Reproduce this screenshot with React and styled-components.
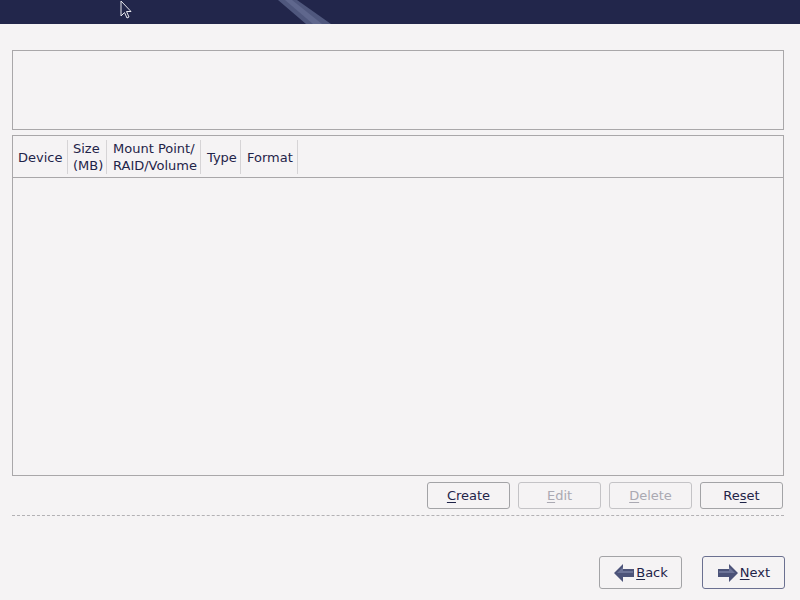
import React from 'react'
import styled, { createGlobalStyle } from 'styled-components'

const GlobalStyle = createGlobalStyle`
  html, body {
    margin: 0;
    padding: 0;
    background: #f5f3f4;
  }
  body {
    font-family: "DejaVu Sans", "Liberation Sans", sans-serif;
    font-size: 13px;
    color: #1f2449;
  }
`

const columns = [
  { label: ['Device'], width: 55, pad: 5 },
  { label: ['Size', '(MB)'], width: 39, pad: 5 },
  { label: ['Mount Point/', 'RAID/Volume'], width: 94, pad: 6 },
  { label: ['Type'], width: 40, pad: 6 },
  { label: ['Format'], width: 57, pad: 6 },
]

const LeftArrow = () => (
  <svg width="22" height="20" viewBox="0 0 22 20">
    <polygon points="1,10 10,1 10,6 21,6 21,14 10,14 10,19" fill="#4c5379" />
    <polygon points="4,10 10,4 10,8 20,8 20,10" fill="#6d7498" />
  </svg>
)

const RightArrow = () => (
  <svg width="22" height="20" viewBox="0 0 22 20">
    <polygon points="21,10 12,1 12,6 1,6 1,14 12,14 12,19" fill="#4c5379" />
    <polygon points="18,10 12,4 12,8 2,8 2,10" fill="#6d7498" />
  </svg>
)

const App = () => {
  return (
    <Page>
      <GlobalStyle />
      <Banner>
        <svg width="800" height="24" viewBox="0 0 800 24">
          <polygon points="278,0 297,0 331,24 306,24" fill="#4f577d" />
          <polygon points="285,0 292,0 322,24 313,24" fill="#5f678d" />
        </svg>
        <Cursor>
          <svg width="14" height="20" viewBox="0 0 14 20">
            <polygon points="1,1 1,16 4.5,12.5 7,18 9,17 6.5,11.5 11,11.5" fill="#22264b" stroke="#e8e8ee" strokeWidth="1" />
          </svg>
        </Cursor>
      </Banner>
      <Main>
        <InfoBox />
        <TableBox>
          <HeaderRow>
            {columns.map((c) => (
              <HeaderCell key={c.label[0]} style={{ width: c.width }} pad={c.pad}>
                {c.label.map((l) => (
                  <div key={l}>{l}</div>
                ))}
              </HeaderCell>
            ))}
          </HeaderRow>
          <TableBody />
        </TableBox>
        <ButtonRow>
          <Button><u>C</u>reate</Button>
          <Button disabled><u>E</u>dit</Button>
          <Button disabled><u>D</u>elete</Button>
          <Button>Re<u>s</u>et</Button>
        </ButtonRow>
        <Separator />
        <NavRow>
          <NavButton>
            <LeftArrow />
            <span><u>B</u>ack</span>
          </NavButton>
          <NavButton primary="true">
            <RightArrow />
            <span><u>N</u>ext</span>
          </NavButton>
        </NavRow>
      </Main>
    </Page>
  )
}

export default App

const Page = styled.div`
  width: 800px;
  height: 600px;
  background: #f5f3f4;
  overflow: hidden;
`
const Banner = styled.div`
  position: relative;
  height: 24px;
  background: #22264b;
  svg {
    display: block;
  }
`
const Cursor = styled.div`
  position: absolute;
  left: 120px;
  top: 0;
`
const Main = styled.div`
  display: flex;
  flex-direction: column;
  padding: 26px 16px 0 12px;
`
const InfoBox = styled.div`
  height: 78px;
  border: 1px solid #a9a7a9;
`
const TableBox = styled.div`
  margin-top: 5px;
  height: 339px;
  border: 1px solid #a9a7a9;
  display: flex;
  flex-direction: column;
`
const HeaderRow = styled.div`
  display: flex;
  align-items: stretch;
  height: 42px;
  border-bottom: 1px solid #a9a7a9;
  padding: 4px 0 3px;
  box-sizing: border-box;
`
const HeaderCell = styled.div`
  box-sizing: border-box;
  display: flex;
  flex-direction: column;
  justify-content: center;
  padding: 0 0 0 ${(p) => p.pad}px;
  border-right: 1px solid #d6d4d6;
  line-height: 17px;
  white-space: nowrap;
  color: #1f2449;
`
const TableBody = styled.div`
  flex: 1;
`
const ButtonRow = styled.div`
  display: flex;
  justify-content: flex-end;
  gap: 8px;
  margin-top: 6px;
  margin-right: 1px;
`
const Button = styled.button`
  width: 83px;
  height: 27px;
  padding: 0;
  background: #f5f3f4;
  border: 1px solid #a3a3a6;
  border-radius: 3px;
  font-family: "DejaVu Sans", "Liberation Sans", sans-serif;
  font-size: 13px;
  color: #1f2449;
  &:disabled {
    color: #aaa9b2;
    border-color: #c4c3c6;
  }
  u {
    text-underline-offset: 2px;
  }
`
const Separator = styled.div`
  margin-top: 6px;
  height: 0;
  border-top: 1px dashed #b3b1b4;
`
const NavRow = styled.div`
  display: flex;
  justify-content: flex-end;
  gap: 20px;
  margin-top: 40px;
  margin-right: -1px;
`
const NavButton = styled.button`
  width: 83px;
  height: 33px;
  padding: 0;
  display: flex;
  align-items: center;
  justify-content: center;
  gap: 1px;
  background: #f5f3f4;
  border: 1px solid ${(p) => (p.primary ? '#6b7090' : '#a3a3a6')};
  border-radius: 3px;
  font-family: "DejaVu Sans", "Liberation Sans", sans-serif;
  font-size: 13px;
  color: #1f2449;
  svg {
    display: block;
  }
  u {
    text-underline-offset: 2px;
  }
`
